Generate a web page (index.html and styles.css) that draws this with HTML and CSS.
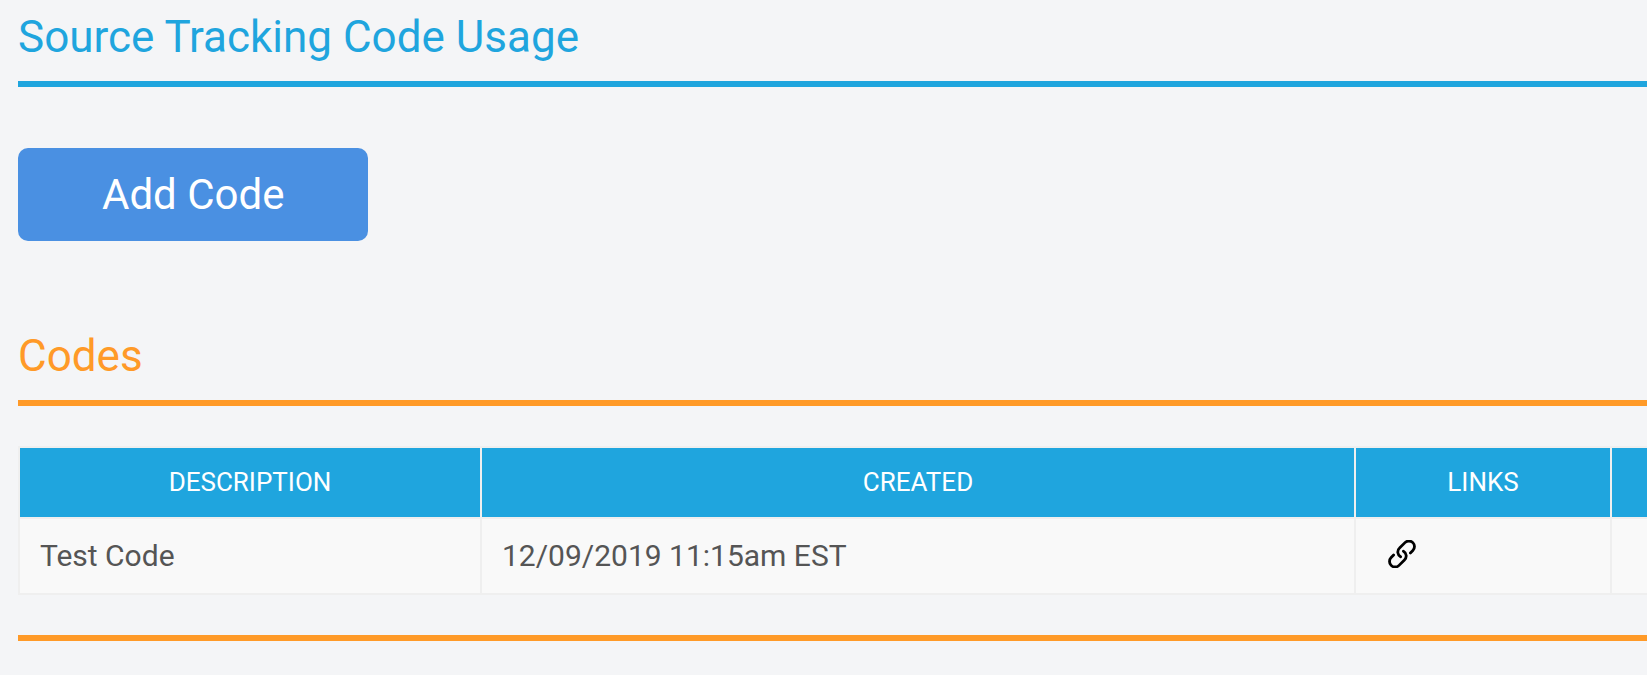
FILE: index.html
```html
<!DOCTYPE html>
<html lang="en">
<head>
    <meta charset="UTF-8">
    <meta name="viewport" content="width=device-width, initial-scale=1.0">
    <title>Source Tracking Code Usage</title>
    <link rel="stylesheet" href="styles.css">
</head>
<body>
    <h1 class="section-title title-usage">Source Tracking Code Usage</h1>

    <button type="button" class="add-btn">Add Code</button>

    <div class="codes-section">
        <h2 class="section-title title-codes">Codes</h2>
        <table class="codes-table">
            <colgroup>
                <col class="col-description">
                <col>
                <col class="col-links">
                <col class="col-actions">
            </colgroup>
            <thead>
                <tr>
                    <th>Description</th>
                    <th>Created</th>
                    <th>Links</th>
                    <th></th>
                </tr>
            </thead>
            <tbody>
                <tr>
                    <td>Test Code</td>
                    <td>12/09/2019 11:15am EST</td>
                    <td>
                        <a href="#" class="link-icon" aria-label="Links">
                            <svg viewBox="0 0 80 80" width="28" height="28">
                                <path d="M64 37 L71 30 A15.5 15.5 0 0 0 48.5 7.5 L33 23 A15.5 15.5 0 0 0 36 48"/>
                                <path d="M16 43 L9 50 A15.5 15.5 0 0 0 31.5 72.5 L47 57 A15.5 15.5 0 0 0 44 32"/>
                            </svg>
                        </a>
                    </td>
                    <td></td>
                </tr>
            </tbody>
        </table>
    </div>
</body>
</html>
```
FILE: styles.css
```css
body {
    font-family: Roboto, Arial, sans-serif;
    color: #555;
    background-color: #f4f5f7;
    margin: 0;
    padding: 10px 0 0 18px;
}
.section-title {
    margin: 0;
    font-size: 44px;
    line-height: 54px;
    font-weight: 400;
    padding-bottom: 17px;
    border-bottom: 6px solid;
}
.title-usage {
    color: #1fa5de;
}
.title-codes {
    color: #ff9a28;
}
.add-btn {
    display: block;
    margin: 61px 0 88px;
    padding: 20px 84px;
    border: none;
    border-radius: 10px;
    background-color: #4a90e2;
    color: #fff;
    font-family: inherit;
    font-size: 42px;
    line-height: 53px;
    cursor: pointer;
}
.add-btn:hover {
    background-color: #3a80d2;
}
.codes-section {
    border-bottom: 6px solid #ff9a28;
    padding-bottom: 40px;
}
.codes-table {
    width: 100%;
    margin-top: 40px;
    table-layout: fixed;
    border-collapse: collapse;
}
.col-description {
    width: 462px;
}
.col-links {
    width: 256px;
}
.col-actions {
    width: 36px;
}
.codes-table th,
.codes-table td {
    border: 2px solid #efefef;
    padding: 18px 20px;
}
.codes-table th:last-child,
.codes-table td:last-child {
    border-right: none;
    padding: 0;
}
.codes-table th {
    background-color: #1fa5de;
    color: #fff;
    font-size: 26px;
    line-height: 33px;
    font-weight: 400;
    text-transform: uppercase;
}
.codes-table td {
    background-color: #f9f9f9;
    font-size: 30px;
    line-height: 38px;
}
.link-icon {
    display: flex;
    padding: 0 0 4px 12px;
}
.link-icon svg {
    fill: none;
    stroke: #000;
    stroke-width: 8;
    stroke-linecap: round;
}
```
